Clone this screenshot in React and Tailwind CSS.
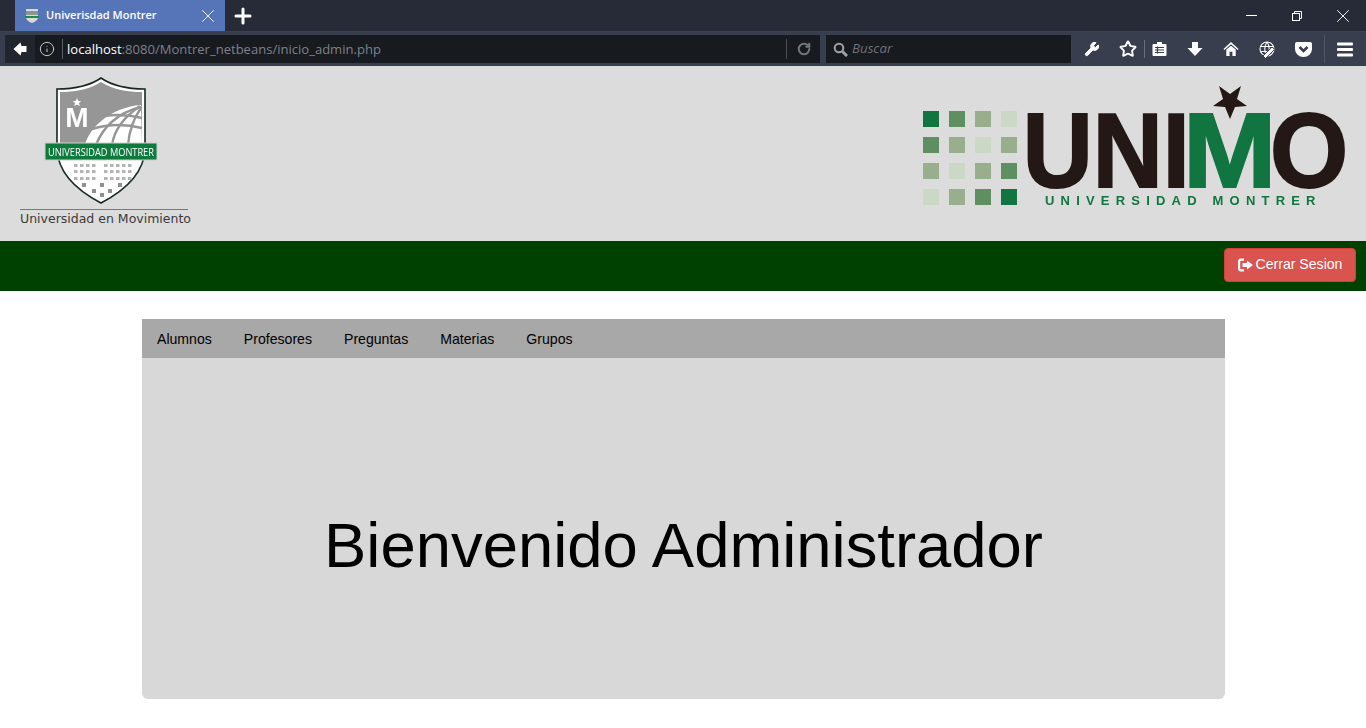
import React from 'react';
import { Info, Plus, X, RotateCw, Wrench, Star } from 'lucide-react';

const Shield = () => (
  <svg width="114" height="128" viewBox="0 0 114 128" className="blur-[0.3px]">
    <path d="M57 1 C70 10 85 12 101 12 L101 72 C100 98 78 115 57 126 C36 115 14 98 13 72 L13 12 C29 12 44 10 57 1 Z" fill="#fff" stroke="#15291f" strokeWidth="1.600" />
    <path d="M57 5 C70 13 84 15 98 15 L98 70 L16 70 L16 15 C30 15 44 13 57 5 Z" fill="#969696" />
    <path d="M41 68 C45 50 68 30 97 28 L98 68 Z" fill="#fff" />
    <g stroke="#969696" strokeWidth="2.400" fill="none">
      <path d="M52 68 C58 52 72 36 97 30" />
      <path d="M68 68 C70 54 80 40 96 29" />
      <path d="M84 68 C85 56 89 42 97 31" />
      <path d="M48 52 C64 47 82 47 98 51" />
      <path d="M60 39 C74 37 86 38 98 41" />
    </g>
    <text x="33" y="50" textAnchor="middle" fontFamily="Liberation Sans, sans-serif" fontWeight="700" fontSize="28" fill="#fff">M</text>
    <path d="M33 21 l1.300 3 3 .2 -2.400 1.900 .9 3 -2.800 -1.700 -2.800 1.700 .9 -3 -2.400 -1.900 3 -.2 Z" fill="#fff" />
    <rect x="1" y="66" width="112" height="17" fill="#0f7a3d" stroke="#c9d2c9" strokeWidth="1" />
    <text x="0" y="0" transform="translate(57 79) scale(0.88 1)" textAnchor="middle" fontFamily="Open Sans, sans-serif" fontSize="10.500" fill="#fff">UNIVERSIDAD MONTRER</text>
    <g fill="#b4b4b4">
      {[87, 93, 100].map((y) =>
        [30, 36, 42, 48, 60, 66, 72, 78, 84].map((x) => (
          <rect key={`${x}-${y}`} x={x} y={y} width="3.500" height="3" />
        ))
      )}
      {[[38, 106], [56, 106], [74, 106], [48, 112], [64, 112], [56, 116]].map(([x, y]) => (
        <rect key={`${x}-${y}`} x={x} y={y} width="4" height="4" fill="#909090" />
      ))}
    </g>
  </svg>
);

const squares = [
  ['#107540', '#5f8f60', '#98ae8d', '#cbd8c6'],
  ['#5f8f60', '#98ae8d', '#cbd8c6', '#98ae8d'],
  ['#98ae8d', '#cbd8c6', '#98ae8d', '#5f8f60'],
  ['#cbd8c6', '#98ae8d', '#5f8f60', '#107540'],
];

const Unimo = () => (
  <svg width="424" height="124" viewBox="0 0 424 124" className="blur-[0.3px]">
    {squares.map((row, r) =>
      row.map((color, c) => (
        <rect key={`${r}-${c}`} x={0 + c * 26} y={26 + r * 26} width="16" height="16" fill={color} />
      ))
    )}
    <g fontFamily="Liberation Sans, sans-serif" fontWeight="700" fontSize="105" strokeWidth="2">
      <text transform="translate(99.800 102) scale(0.923 1)" fill="#231815" stroke="#231815">UNI</text>
      <text transform="translate(260 102) scale(1.068 1)" fill="#107540" stroke="#107540">M</text>
      <text transform="translate(347 102) scale(0.957 1)" fill="#231815" stroke="#231815">O</text>
    </g>
    <path d="M296 1 L307 9 L318 1 L314 14 L324 21 L312 22 L307 34 L302 22 L290 21 L300 14 Z" fill="#231815" stroke="#dcdcdc" strokeWidth="1.500" paintOrder="stroke" />
    <text x="122" y="120" letterSpacing="6.200" fontFamily="Liberation Sans, sans-serif" fontWeight="700" fontSize="13" fill="#107540">UNIVERSIDAD MONTRER</text>
  </svg>
);

const ToolIcon = ({ children, className = '' }) => (
  <div className={`w-4 flex items-center justify-center shrink-0 ${className}`}>{children}</div>
);

const App = () => {
  return (
    <div className="min-h-[728px] bg-white font-['Liberation_Sans',Arial,sans-serif]">
      {/* browser chrome */}
      <div className="h-[31px] bg-[#272b38] flex items-stretch pl-[15px]">
        <div className="w-[210px] bg-[#5675b9] flex items-center pl-[10px] pr-[6px] text-white">
          <svg width="14" height="16" viewBox="0 0 14 16" className="shrink-0">
            <path d="M1 1h12v8c0 3-3 5-6 6-3-1-6-3-6-6z" fill="#d8dcd8" />
            <rect x="1" y="3" width="12" height="4" fill="#8f9591" />
            <rect x="0" y="8" width="14" height="2" fill="#1f8a4c" />
          </svg>
          <span className="ml-[7px] flex-1 text-[11px] font-['Open_Sans',sans-serif] font-semibold">Univerisdad Montrer</span>
          <X size={22} strokeWidth={1} color="#fff" />
        </div>
        <div className="w-[36px] flex items-center justify-center">
          <Plus size={24} strokeWidth={3} color="#fff" />
        </div>
        <div className="flex-1" />
        <div className="flex items-center text-white">
          <div className="w-[11px] h-px bg-white mr-[34px]" />
          <svg width="12" height="12" viewBox="0 0 12 12" fill="none" stroke="#fff" className="mr-[29px]">
            <rect x="1.500" y="3.500" width="7" height="7" />
            <path d="M3.500 3.500V1.500H10.500V8.500H8.500" />
          </svg>
          <X size={22} strokeWidth={1} className="mr-[12px]" />
        </div>
      </div>
      <div className="h-[35px] bg-[#383e4e] flex items-center pl-[5px] border-t border-[#3d4352]">
        <div className="w-[815px] h-[28px] bg-[#171a1f] flex items-center">
          <div className="w-[30px] h-full bg-[#21252e] flex items-center justify-center">
            <svg width="14" height="14" viewBox="0 0 14 14">
              <path d="M7.500 0.500 L0.500 7 L7.500 13.500 L8.500 10 H13.500 V4 H8.500 Z" fill="#fff" />
            </svg>
          </div>
          <Info size={16} strokeWidth={1.500} color="#c4c6ca" className="ml-[4px]" />
          <div className="w-px h-[20px] bg-[#5a5e68] ml-[7px]" />
          <div className="ml-[4px] flex-1 text-[13.050px] leading-[26px] pb-[1px] text-[#7d828b] font-['Open_Sans',sans-serif] whitespace-nowrap">
            <span className="text-white">localhost</span>:8080/Montrer_netbeans/inicio_admin.php
          </div>
          <div className="w-px h-[20px] bg-[#4a4e58]" />
          <div className="w-[33px] flex items-center justify-center">
            <RotateCw size={14} strokeWidth={3.500} color="#70757e" />
          </div>
        </div>
        <div className="ml-[6px] w-[245px] h-[28px] bg-[#171a1f] flex items-center pl-[7px]">
          <svg width="15" height="15" viewBox="0 0 15 15" fill="none" stroke="#a0a3a8" className="shrink-0">
            <circle cx="6" cy="6" r="4.300" strokeWidth="2" />
            <path d="M9.500 9.500L14 14" strokeWidth="3" />
          </svg>
          <span className="ml-[4px] text-[13.300px] italic text-[#6f7278] font-['Open_Sans',sans-serif]">Buscar</span>
        </div>
        <div className="ml-[13px] flex items-center text-white">
          <ToolIcon><Wrench size={16} fill="#fff" strokeWidth={1.500} /></ToolIcon>
          <ToolIcon className="ml-[20px]"><Star size={18} strokeWidth={2.600} className="shrink-0" /></ToolIcon>
          <div className="w-px h-[18px] bg-[#6a6f7c] ml-[8px]" />
          <ToolIcon className="ml-[6px]">
            <svg width="15" height="16" viewBox="0 0 15 16">
              <path d="M1.500 3h3.500V1h5v2h3.500a1 1 0 0 1 1 1v10a1 1 0 0 1-1 1H1.500a1 1 0 0 1-1-1V4a1 1 0 0 1 1-1z" fill="#fff" />
              <path d="M3 6.500h9M3 9h9M3 11.500h9M5.500 5.500v7" stroke="#383e4e" strokeWidth="1.200" />
            </svg>
          </ToolIcon>
          <ToolIcon className="ml-[20px]">
            <svg width="16" height="16" viewBox="0 0 16 16">
              <path d="M5 1h6v6h4.500L8 15 .5 7H5z" fill="#fff" />
            </svg>
          </ToolIcon>
          <ToolIcon className="ml-[20px]">
            <svg width="17" height="16" viewBox="0 0 17 16">
              <path d="M8.500 0.500L16.500 8 15.500 9 8.500 3 1.500 9 .5 8z" fill="#fff" />
              <path d="M3.500 8.500L8.500 4.500l5 4V15.500H10V11H7v4.500H3.500z" fill="#fff" />
            </svg>
          </ToolIcon>
          <ToolIcon className="ml-[20px]">
            <svg width="17" height="17" viewBox="0 0 17 17" fill="none" stroke="#fff" strokeWidth="1.100" className="shrink-0">
              <circle cx="8" cy="8" r="7" />
              <path d="M1 5.500h14M1 10.500h14M8 1c-3 4-3 10 0 14M8 1c3 4 3 10 0 14" />
              <path d="M4 15l9-9 2.500 2.500-9 9z" fill="#fff" stroke="#383e4e" strokeWidth="1" />
            </svg>
          </ToolIcon>
          <ToolIcon className="ml-[20px]">
            <svg width="17" height="15" viewBox="0 0 17 15" className="shrink-0">
              <path d="M2 0h13a2 2 0 0 1 2 2v5a8.500 8 0 0 1-17 0V2a2 2 0 0 1 2-2z" fill="#fff" />
              <path d="M4.500 5l4 4 4-4" fill="none" stroke="#383e4e" strokeWidth="2.600" />
            </svg>
          </ToolIcon>
          <div className="w-px h-[28px] bg-[#4f5563] ml-[13px]" />
          <ToolIcon className="ml-[12px]">
            <svg width="16" height="15" viewBox="0 0 16 15" fill="#fff">
              <rect y="0.500" width="16" height="3" rx="1" />
              <rect y="6" width="16" height="3" rx="1" />
              <rect y="11.500" width="16" height="3" rx="1" />
            </svg>
          </ToolIcon>
        </div>
      </div>

      {/* page header */}
      <header className="h-[175px] bg-[#dcdcdc] flex items-start justify-between">
        <div className="ml-[20px] w-[170px] flex flex-col items-start pt-[11px]">
          <div className="ml-[24px] h-[128px]">
            <Shield />
          </div>
          <div className="w-[168px] h-px bg-[#77797a] mt-[4px]" />
          <div className="text-[12.500px] leading-[17px] text-[#3a3a3a] font-['DejaVu_Sans',sans-serif] whitespace-nowrap">Universidad en Movimiento</div>
        </div>
        <div className="mr-[19px] mt-[19px]">
          <Unimo />
        </div>
      </header>
      <div className="h-[50px] bg-[#004000] flex items-start justify-end pr-[10px] pt-[7px]">
        <button className="h-[34px] w-[132px] bg-[#d9534f] border border-[#d43f3a] rounded-[4px] text-white text-[14.100px] flex items-center justify-center">
          <svg width="15" height="14" viewBox="0 0 15 14" className="mr-[3px]" fill="#fff">
            <path d="M6 0.500H3a3 3 0 0 0-3 3v7a3 3 0 0 0 3 3h3v-2.200H3.200a1 1 0 0 1-1-1V3.700a1 1 0 0 1 1-1H6z" />
            <path d="M9 2.500L15 7l-6 4.500V9H4.500V5H9z" />
          </svg>
          Cerrar Sesion
        </button>
      </div>

      {/* main panel */}
      <main className="pt-[28px] pl-[142px] pr-[141px]">
        <div className="h-[380px] bg-[#d8d8d8] rounded-b-[6px] flex flex-col">
          <nav className="h-[39px] bg-[#a8a8a8] flex items-center pl-[15px] pt-[2px] gap-[32px] text-[14.100px] text-black shrink-0">
            <span>Alumnos</span>
            <span>Profesores</span>
            <span>Preguntas</span>
            <span>Materias</span>
            <span>Grupos</span>
          </nav>
          <div className="flex-1 flex items-center justify-center pt-[34px]">
            <h1 className="text-[63.400px] leading-none text-black">Bienvenido Administrador</h1>
          </div>
        </div>
      </main>
    </div>
  );
};

export default App;
